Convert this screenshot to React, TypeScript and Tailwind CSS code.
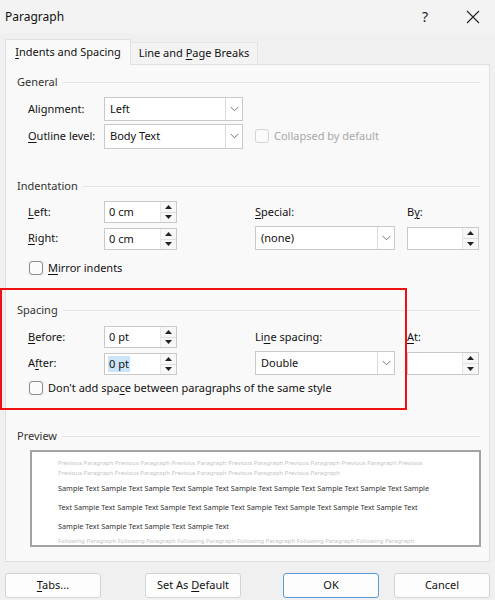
import React from "react";

const FONT = { fontFamily: '"Noto Sans", "Open Sans", Arial, sans-serif' };

function U({ children }: { children: React.ReactNode }) {
  return <span className="underline underline-offset-2 decoration-1">{children}</span>;
}

function GroupHeader({ title }: { title: string }) {
  return (
    <div className="flex items-center h-4 pl-[11px] pr-[9px]">
      <span className="text-[11px] text-[#333]">{title}</span>
      <div className="flex-1 ml-[5px] border-t border-[#e4e4e4]" />
    </div>
  );
}

function Chevron() {
  return (
    <svg width="9" height="6" viewBox="0 0 9 6" fill="none">
      <path d="M0.5 0.8 L4.5 4.8 L8.5 0.8" stroke="#777" strokeWidth="1" />
    </svg>
  );
}

function Select({ value, width, height = 24 }: { value: string; width: number; height?: number }) {
  return (
    <div
      className="flex bg-white border border-[#c9c9c9] text-[11px] text-[#111]"
      style={{ width, height }}
    >
      <div className="flex-1 flex items-center pl-[5px]">{value}</div>
      <div className="w-[17px] border-l border-[#dadada] flex items-center justify-center">
        <Chevron />
      </div>
    </div>
  );
}

function Spinner({ value, width = 73, height = 22, selected = false }: { value: string; width?: number; height?: number; selected?: boolean }) {
  return (
    <div className="flex bg-white border border-[#c9c9c9] text-[11px] text-[#111]" style={{ width, height }}>
      <div className="flex-1 flex items-center pl-[3px]">
        {selected ? <span className="bg-[#cce4f7] px-[1px]">{value}</span> : <span className="px-[1px]">{value}</span>}
      </div>
      <div className="w-[16px] flex flex-col border-l border-[#e6e6e6] bg-[#f7f7f7]">
        <div className="flex-1 flex items-center justify-center border-b border-[#e0e0e0]">
          <svg width="7" height="4" viewBox="0 0 7 4"><path d="M0 4 L3.5 0 L7 4 Z" fill="#222" /></svg>
        </div>
        <div className="flex-1 flex items-center justify-center">
          <svg width="7" height="4" viewBox="0 0 7 4"><path d="M0 0 L3.5 4 L7 0 Z" fill="#222" /></svg>
        </div>
      </div>
    </div>
  );
}

function Checkbox({ disabled = false }: { disabled?: boolean }) {
  return (
    <div
      className={
        "w-[14px] h-[14px] rounded-[3px] border bg-[#fbfbfb] " +
        (disabled ? "border-[#d4d4d4]" : "border-[#8a8a8a]")
      }
    />
  );
}

function Label({ children }: { children: React.ReactNode }) {
  return <div className="w-[76px] text-[11px] text-[#111]">{children}</div>;
}

function Button({ children, primary = false }: { children: React.ReactNode; primary?: boolean }) {
  return (
    <div
      className={
        "w-[96px] h-[25px] rounded-[3px] flex items-center justify-center text-[11px] text-[#111] bg-[#fdfdfd] border " +
        (primary ? "border-[#5b9bd5]" : "border-[#d4d4d4]")
      }
    >
      <span>{children}</span>
    </div>
  );
}

const prev = "Previous Paragraph ";

export default function App() {
  return (
    <div className="relative w-[495px] h-[600px] bg-[#f0f0f0] overflow-hidden select-none" style={FONT}>
      {/* Title bar */}
      <div className="h-[33px] flex items-center bg-[#f3f3f3]">
        <span className="pl-[5px] text-[12px] text-[#111]">Paragraph</span>
        <div className="flex-1" />
        <span className="w-[20px] text-center text-[14px] text-[#222] mr-[31px]">?</span>
        <svg width="14" height="14" viewBox="0 0 14 14" className="mr-[15px]">
          <path d="M1 1 L13 13 M13 1 L1 13" stroke="#222" strokeWidth="1.1" />
        </svg>
      </div>

      {/* Tabs */}
      <div className="flex items-end h-[31px] pl-[5px]">
        <div className="h-[26px] w-[126px] bg-[#f9f9f9] border border-b-0 border-[#e0e0e0] flex items-center justify-center text-[11px] text-[#111] relative z-10 -mb-[1px]">
          <span><U>I</U>ndents and Spacing</span>
        </div>
        <div className="h-[22px] w-[127px] bg-[#f3f3f3] border border-b-0 border-l-0 border-[#e4e4e4] flex items-center justify-center text-[11px] text-[#111]">
          <span>Line and <U>P</U>age Breaks</span>
        </div>
      </div>

      {/* Panel */}
      <div className="ml-[5px] w-[485px] h-[498px] bg-[#f9f9f9] border border-[#e0e0e0] pt-[9px]">
        <GroupHeader title="General" />
        <div className="pl-[22px] mt-[7px] flex items-center h-[24px]">
          <Label>Alignment:</Label>
          <Select value="Left" width={139} height={24} />
        </div>
        <div className="pl-[22px] mt-[3px] flex items-center h-[24px]">
          <Label><U>O</U>utline level:</Label>
          <Select value="Body Text" width={139} height={25} />
          <div className="ml-[12px] flex items-center gap-[5px]">
            <Checkbox disabled />
            <span className="text-[11px] text-[#a8a8a8]">Collapsed by default</span>
          </div>
        </div>

        <div className="mt-[30px]">
          <GroupHeader title="Indentation" />
        </div>
        <div className="pl-[22px] mt-[7px] flex items-center h-[22px]">
          <Label><U>L</U>eft:</Label>
          <Spinner value="0 cm" />
          <div className="ml-[78px] w-[152px] text-[11px] text-[#111]"><U>S</U>pecial:</div>
          <div className="text-[11px] text-[#111]">B<U>y</U>:</div>
        </div>
        <div className="pl-[22px] mt-[3px] flex items-end h-[24px]">
          <div className="self-center"><Label><U>R</U>ight:</Label></div>
          <Spinner value="0 cm" />
          <div className="ml-[78px]">
            <Select value="(none)" width={140} height={24} />
          </div>
          <div className="ml-[12px]">
            <Spinner value="" width={72} height={23} />
          </div>
        </div>
        <div className="pl-[23px] mt-[10px] flex items-center h-[16px] gap-[5px]">
          <Checkbox />
          <span className="text-[11px] text-[#111]"><U>M</U>irror indents</span>
        </div>

        <div className="mt-[26px]">
          <GroupHeader title="Spacing" />
        </div>
        <div className="pl-[22px] mt-[8px] flex items-center h-[22px]">
          <Label><U>B</U>efore:</Label>
          <Spinner value="0 pt" />
          <div className="ml-[78px] w-[152px] text-[11px] text-[#111]">Li<U>n</U>e spacing:</div>
          <div className="text-[11px] text-[#111]"><U>A</U>t:</div>
        </div>
        <div className="pl-[22px] mt-[3px] flex items-end h-[24px]">
          <div className="self-center"><Label>A<U>f</U>ter:</Label></div>
          <Spinner value="0 pt" selected />
          <div className="ml-[78px]">
            <Select value="Double" width={140} height={24} />
          </div>
          <div className="ml-[12px]">
            <Spinner value="" width={72} height={23} />
          </div>
        </div>
        <div className="pl-[23px] mt-[5px] flex items-center h-[16px] gap-[5px]">
          <Checkbox />
          <span className="text-[11px] text-[#111]">Don't add spa<U>c</U>e between paragraphs of the same style</span>
        </div>

        <div className="mt-[32px]">
          <GroupHeader title="Preview" />
        </div>
        <div className="ml-[24px] mt-[6px] w-[451px] h-[97px] bg-white border-2 border-[#a3a3a3] overflow-hidden pl-[26px] pt-[6px]">
          <div className="text-[6px] leading-[10px] text-[#c4c4c4] whitespace-nowrap">
            <div>{prev.repeat(6)}Previous</div>
            <div>{prev.repeat(4)}Previous Paragraph</div>
          </div>
          <div className="mt-[1px] text-[7.3px] leading-[19px] text-[#333] whitespace-nowrap">
            <div>{"Sample Text ".repeat(8)}Sample</div>
            <div>Text {"Sample Text ".repeat(7)}Sample Text</div>
            <div>{"Sample Text ".repeat(3)}Sample Text</div>
          </div>
          <div className="h-[10px] text-[6px] leading-[10px] text-[#c4c4c4] whitespace-nowrap">
            {"Following Paragraph ".repeat(6)}
          </div>
        </div>
      </div>

      {/* Buttons */}
      <div className="flex items-center justify-between px-[5px] mt-[11px]">
        <div className="flex gap-[44px]">
          <Button><U>T</U>abs...</Button>
          <Button>Set As <U>D</U>efault</Button>
        </div>
        <div className="flex gap-[15px]">
          <Button primary>OK</Button>
          <Button>Cancel</Button>
        </div>
      </div>

      {/* Annotation highlight */}
      <div className="absolute left-[0px] top-[288px] w-[407px] h-[122px] border-2 border-[#ee1111] pointer-events-none" />
    </div>
  );
}
